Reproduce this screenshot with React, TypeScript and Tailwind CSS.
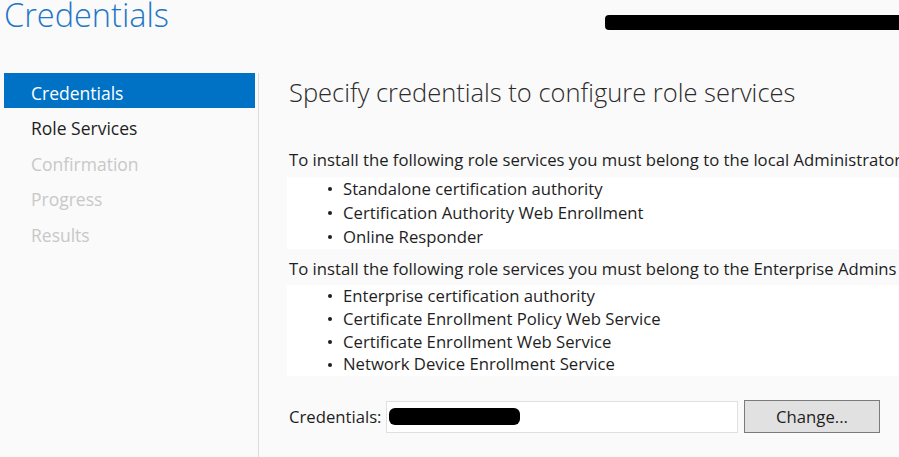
import React from "react";

const font = { fontFamily: '"Open Sans", "Noto Sans", sans-serif' };

export default function App() {
  const list1 = [
    "Standalone certification authority",
    "Certification Authority Web Enrollment",
    "Online Responder",
  ];
  const list2 = [
    "Enterprise certification authority",
    "Certificate Enrollment Policy Web Service",
    "Certificate Enrollment Web Service",
    "Network Device Enrollment Service",
  ];
  return (
    <div
      className="w-[899px] h-[457px] bg-[#fafafa] overflow-hidden flex flex-col text-[#1e1e1e]"
      style={font}
    >
      <div className="h-[73px] flex justify-between items-start shrink-0">
        <div className="pl-[4px] -mt-[7px] text-[32.5px] leading-[44px] font-light text-[#1f76c7]">
          Credentials
        </div>
        <div className="mt-[15px] w-[294px] h-[15px] bg-black rounded-l-[4px]" />
      </div>
      <div className="flex flex-1">
        <div className="w-[259px] shrink-0 border-r border-[#dcdcdc] pl-[4px] pr-[3px] flex flex-col">
          <div className="h-[35px] bg-[#0072c6] text-white text-[17.5px] leading-[29px] pt-[6px] pl-[27px]">
            Credentials
          </div>
          <div className="h-[35.5px] text-[17.5px] leading-[29.5px] pt-[6px] pl-[27px] text-[#1e1e1e]">
            Role Services
          </div>
          <div className="h-[35.5px] text-[17.5px] leading-[29.5px] pt-[6px] pl-[27px] text-[#c8c8c8]">
            Confirmation
          </div>
          <div className="h-[35.5px] text-[17.5px] leading-[29.5px] pt-[6px] pl-[27px] text-[#c8c8c8]">
            Progress
          </div>
          <div className="h-[35.5px] text-[17.5px] leading-[29.5px] pt-[6px] pl-[27px] text-[#c8c8c8]">
            Results
          </div>
        </div>
        <div className="flex-1 pl-[30px] flex flex-col min-w-0">
          <div className="mt-[1px] text-[25.5px] leading-[36px] font-light text-[#2b2b2b] whitespace-nowrap">
            Specify credentials to configure role services
          </div>
          <div className="mt-[40px] text-[16.7px] leading-[20px] whitespace-nowrap">
            To install the following role services you must belong to the local Administrators group:
          </div>
          <div className="-ml-[2px] mt-[7px] bg-white">
            {list1.map((t) => (
              <div key={t} className="h-[24px] leading-[24px] text-[16.7px] flex items-center pl-[41px] whitespace-nowrap">
                <span className="w-[4px] h-[4px] rounded-full bg-[#1e1e1e] mr-[11px]" />
                {t}
              </div>
            ))}
          </div>
          <div className="mt-[10px] text-[16.7px] leading-[20px] whitespace-nowrap">
            To install the following role services you must belong to the Enterprise Admins group:
          </div>
          <div className="-ml-[2px] mt-[6px] bg-white">
            {list2.map((t) => (
              <div key={t} className="h-[22.75px] leading-[22.75px] text-[16.7px] flex items-center pl-[41px] whitespace-nowrap">
                <span className="w-[4px] h-[4px] rounded-full bg-[#1e1e1e] mr-[11px]" />
                {t}
              </div>
            ))}
          </div>
          <div className="mt-[24px] flex items-center">
            <span className="text-[16.7px] w-[97px] whitespace-nowrap">Credentials:</span>
            <div className="w-[352px] h-[32px] bg-white border border-[#e0e0e0] flex items-center pl-[2px]">
              <div className="w-[131px] h-[17px] bg-black rounded-[6px]" />
            </div>
            <button className="ml-[6px] w-[136px] h-[33px] bg-[#e1e1e1] border border-[#7a7a7a] text-[16.7px] text-[#1e1e1e] flex items-center justify-center">
              Change...
            </button>
          </div>
        </div>
      </div>
    </div>
  );
}
